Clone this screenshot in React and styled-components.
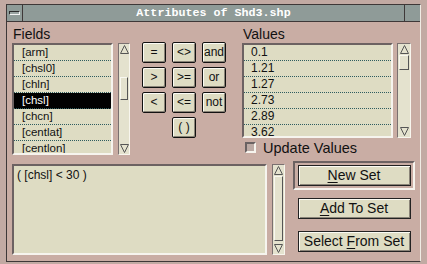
import React from 'react';
import styled, { createGlobalStyle } from 'styled-components';

const Global = createGlobalStyle`
  html, body { margin: 0; padding: 0; background: #c2aaa3; }
  body { width: 427px; height: 264px; overflow: hidden; font-family: "Liberation Sans", Arial, sans-serif; }
`;

const PINK = '#c9ada4';
const LIGHT = '#dedcc3';

const Window = styled.div`
  margin: 4px 6px 0 6px;
  width: 415px;
  height: 258px;
  box-sizing: border-box;
  border: 1px solid #3e3838;
  border-right-color: #f0ece4;
  background: ${PINK};
  display: flex;
  flex-direction: column;
`;

const TitleBar = styled.div`
  height: 16px;
  display: flex;
  background: #8f9b98;
  border-bottom: 1px solid #3e3838;
`;

const TitleBox = styled.div`
  width: 15px;
  display: flex;
  align-items: center;
  justify-content: center;
  border-${p => (p.$side === 'left' ? 'right' : 'left')}: 1px solid #3e3838;
`;

const MinGlyph = styled.div`
  width: 9px;
  height: 2px;
  border: 1px solid #2c2c2c;
  border-bottom-color: #f4f4f4;
  border-right-color: #f4f4f4;
  background: #9aa4a2;
`;

const Title = styled.div`
  flex: 1;
  text-align: center;
  color: #ffffff;
  font-family: "Liberation Mono", "DejaVu Sans Mono", monospace;
  font-weight: bold;
  font-size: 11.7px;
  line-height: 16px;
`;

const Content = styled.div`
  flex: 1;
  padding: 4px 0 0 5px;
  display: flex;
  flex-direction: column;
`;

const TopRow = styled.div`
  display: flex;
  align-items: flex-start;
`;

const Column = styled.div`
  display: flex;
  flex-direction: column;
  margin-left: ${p => p.$ml || 0}px;
`;

const Label = styled.div`
  height: 16px;
  line-height: 16px;
  font-size: 14px;
  color: #111;
  margin-bottom: 1px;
  padding-left: 1px;
`;

const ListRow = styled.div`
  display: flex;
  gap: ${p => p.$gap}px;
  height: ${p => p.$h}px;
`;

const ListBox = styled.div`
  width: ${p => p.$w}px;
  box-sizing: border-box;
  background: ${LIGHT};
  border: 2px solid #6c6262;
  border-right-color: #f6f4ee;
  border-bottom-color: #f6f4ee;
  overflow: hidden;
`;

const Item = styled.div`
  height: 16px;
  box-sizing: border-box;
  line-height: 15px;
  font-size: ${p => p.$fs}px;
  padding-left: ${p => p.$pl}px;
  border-bottom: 1px dotted #2f5d60;
  background: ${p => (p.$sel ? '#000' : 'transparent')};
  color: ${p => (p.$sel ? '#fff' : '#111')};
`;

const Scroll = styled.div`
  width: ${p => p.$w}px;
  box-sizing: border-box;
  background: #e4e2ce;
  border: 1px solid #7a7070;
  border-right-color: #f8f6ee;
  border-bottom-color: #f8f6ee;
  display: flex;
  flex-direction: column;
  align-items: center;
  padding: 1px 0;
`;

const Track = styled.div`
  flex: 1;
  width: 100%;
  box-sizing: border-box;
  padding: ${p => p.$top}px 1px 0 1px;
`;

const Thumb = styled.div`
  height: ${p => p.$h}px;
  box-sizing: border-box;
  border: 1px solid #f8f8f0;
  border-right-color: #555;
  border-bottom-color: #555;
`;

const Arrow = ({ down }) => (
  <svg width="9" height="9" viewBox="0 0 9 9">
    {down ? (
      <path d="M0.5 0.5 L8.5 0.5 L4.5 8.5 Z" fill="none" stroke="#555" strokeWidth="1" />
    ) : (
      <path d="M4.5 0.5 L8.5 8.5 L0.5 8.5 Z" fill="none" stroke="#555" strokeWidth="1" />
    )}
  </svg>
);

const ScrollBar = ({ w, top, thumb }) => (
  <Scroll $w={w}>
    <Arrow />
    <Track $top={top}>
      <Thumb $h={thumb} />
    </Track>
    <Arrow down />
  </Scroll>
);

const Ops = styled.div`
  margin-top: 16px;
  margin-left: 12px;
  display: grid;
  grid-template-columns: repeat(3, 24px);
  grid-auto-rows: 21px;
  column-gap: 6px;
  row-gap: 4px;
`;

const OpBtn = styled.button`
  grid-column: ${p => p.$col || 'auto'};
  margin: 0;
  padding: 0;
  box-sizing: border-box;
  border: 1px solid #111;
  border-radius: 2px;
  background: ${LIGHT};
  box-shadow: inset 1px 1px 0 #fbfbf4, inset -1px -1px 0 #8a8478;
  font-family: "Liberation Sans", Arial, sans-serif;
  font-size: 12px;
  color: #111;
  line-height: 19px;
`;

const CheckRow = styled.div`
  display: flex;
  align-items: center;
  margin-top: 3px;
  padding-left: 3px;
  height: 13px;
`;

const CheckBox = styled.div`
  width: 11px;
  height: 11px;
  box-sizing: border-box;
  border: 2px solid #6a6262;
  border-right-color: #f6f4ee;
  border-bottom-color: #f6f4ee;
  background: #bcaaa4;
`;

const CheckLabel = styled.span`
  margin-left: 7px;
  font-size: 14.5px;
  color: #111;
`;

const BottomRow = styled.div`
  display: flex;
  margin-top: 6px;
`;

const TextRow = styled.div`
  display: flex;
  gap: 5px;
  height: 91px;
  margin-top: 3px;
`;

const TextArea = styled.div`
  width: 255px;
  box-sizing: border-box;
  background: ${LIGHT};
  border: 2px solid #6c6262;
  border-right-color: #f6f4ee;
  border-bottom-color: #f6f4ee;
  padding: 2px 0 0 3px;
  font-size: 12px;
  color: #111;
`;

const Buttons = styled.div`
  margin-left: 8px;
  width: 122px;
  display: flex;
  flex-direction: column;
  align-items: center;
`;

const DefaultFrame = styled.div`
  width: 122px;
  box-sizing: border-box;
  border: 2px solid #6c6262;
  border-right-color: #f6f4ee;
  border-bottom-color: #f6f4ee;
  padding: 2px;
  display: flex;
  justify-content: center;
`;

const PushBtn = styled.button`
  width: 113px;
  height: 21px;
  margin: ${p => p.$mt || 0}px 0 0 0;
  padding: 0;
  box-sizing: border-box;
  border: 1px solid #222;
  background: ${LIGHT};
  box-shadow: inset 1px 1px 0 #fbfbf4, inset -1px -1px 0 #8a8478;
  font-family: "Liberation Sans", Arial, sans-serif;
  font-size: 14px;
  color: #111;
  line-height: 19px;
`;

const U = styled.span`
  text-decoration: underline;
  text-underline-offset: 2px;
`;

const fields = ['[arm]', '[chsl0]', '[chln]', '[chsl]', '[chcn]', '[centlat]', '[centlon]'];
const values = ['0.1', '1.21', '1.27', '2.73', '2.89', '3.62'];

export default function App() {
  return (
    <>
      <Global />
      <Window>
        <TitleBar>
          <TitleBox $side="left"><MinGlyph /></TitleBox>
          <Title>Attributes of Shd3.shp</Title>
          <TitleBox $side="right" />
        </TitleBar>
        <Content>
          <TopRow>
            <Column>
              <Label>Fields</Label>
              <ListRow $gap={5} $h={112}>
                <ListBox $w={101}>
                  {fields.map(f => (
                    <Item key={f} $pl={8} $fs={11.5} $sel={f === '[chsl]'}>{f}</Item>
                  ))}
                </ListBox>
                <ScrollBar w={12} top={23} thumb={23} />
              </ListRow>
            </Column>
            <Ops>
              <OpBtn>=</OpBtn>
              <OpBtn>&lt;&gt;</OpBtn>
              <OpBtn>and</OpBtn>
              <OpBtn>&gt;</OpBtn>
              <OpBtn>&gt;=</OpBtn>
              <OpBtn>or</OpBtn>
              <OpBtn>&lt;</OpBtn>
              <OpBtn>&lt;=</OpBtn>
              <OpBtn>not</OpBtn>
              <OpBtn $col="2">( )</OpBtn>
            </Ops>
            <Column $ml={16}>
              <Label>Values</Label>
              <ListRow $gap={4} $h={95}>
                <ListBox $w={151}>
                  {values.map(v => (
                    <Item key={v} $pl={7} $fs={12}>{v}</Item>
                  ))}
                </ListBox>
                <ScrollBar w={14} top={1} thumb={15} />
              </ListRow>
              <CheckRow>
                <CheckBox />
                <CheckLabel>Update Values</CheckLabel>
              </CheckRow>
            </Column>
          </TopRow>
          <BottomRow>
            <TextRow>
              <TextArea>( [chsl] &lt; 30 )</TextArea>
              <ScrollBar w={13} top={1} thumb={65} />
            </TextRow>
            <Buttons>
              <DefaultFrame>
                <PushBtn><U>N</U>ew Set</PushBtn>
              </DefaultFrame>
              <PushBtn $mt={8}><U>A</U>dd To Set</PushBtn>
              <PushBtn $mt={12}>Select <U>F</U>rom Set</PushBtn>
            </Buttons>
          </BottomRow>
        </Content>
      </Window>
    </>
  );
}
